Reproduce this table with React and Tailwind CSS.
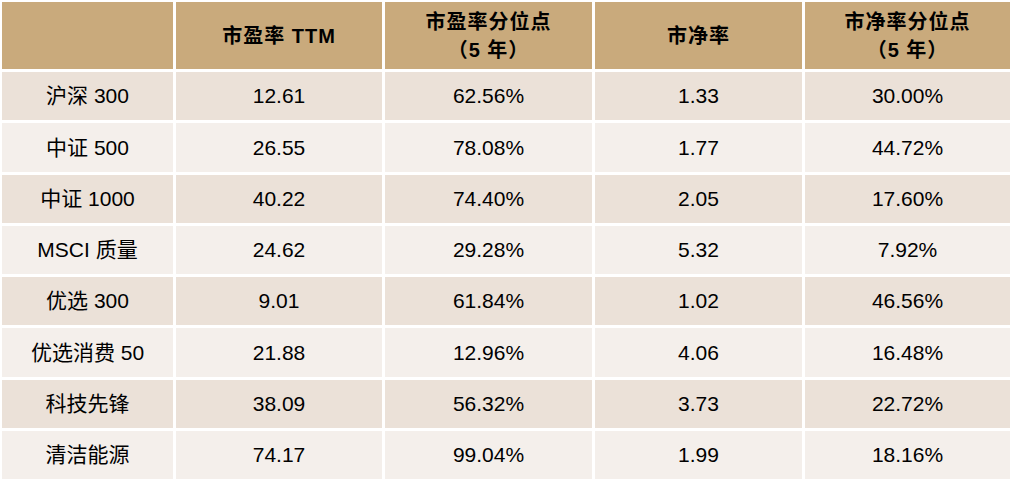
const HEADERS = [
  [''],
  ['市盈率 TTM'],
  ['市盈率分位点', '（5 年）'],
  ['市净率'],
  ['市净率分位点', '（5 年）'],
]

const ROWS = [
  ['沪深 300', '12.61', '62.56%', '1.33', '30.00%'],
  ['中证 500', '26.55', '78.08%', '1.77', '44.72%'],
  ['中证 1000', '40.22', '74.40%', '2.05', '17.60%'],
  ['MSCI 质量', '24.62', '29.28%', '5.32', '7.92%'],
  ['优选 300', '9.01', '61.84%', '1.02', '46.56%'],
  ['优选消费 50', '21.88', '12.96%', '4.06', '16.48%'],
  ['科技先锋', '38.09', '56.32%', '3.73', '22.72%'],
  ['清洁能源', '74.17', '99.04%', '1.99', '18.16%'],
]

export default function App() {
  return (
    <div
      className="w-[1012px] h-[484px] bg-white px-[2px] pt-[2px] pb-[5px] text-black"
      style={{ fontFamily: '"Liberation Sans", "Noto Sans CJK SC", sans-serif' }}
    >
      <div className="grid h-full grid-cols-[171px_206px_207px_207px_1fr] grid-rows-[67px_repeat(8,1fr)] gap-[3px]">
        {/* Header */}
        {HEADERS.map((lines, i) => (
          <div
            key={'h' + i}
            className="bg-[#c9aa7c] flex flex-col items-center justify-center text-[20px] font-bold leading-[28px] tracking-[1px]"
          >
            {lines.map((l) => (
              <span key={l}>{l}</span>
            ))}
          </div>
        ))}

        {/* Body */}
        {ROWS.map((row, r) =>
          row.map((cell, c) => (
            <div
              key={r + '-' + c}
              className={`flex items-center justify-center text-[21px] ${
                r % 2 === 0 ? 'bg-[#ebe1d8]' : 'bg-[#f4efeb]'
              }`}
            >
              {cell}
            </div>
          ))
        )}
      </div>
    </div>
  )
}
